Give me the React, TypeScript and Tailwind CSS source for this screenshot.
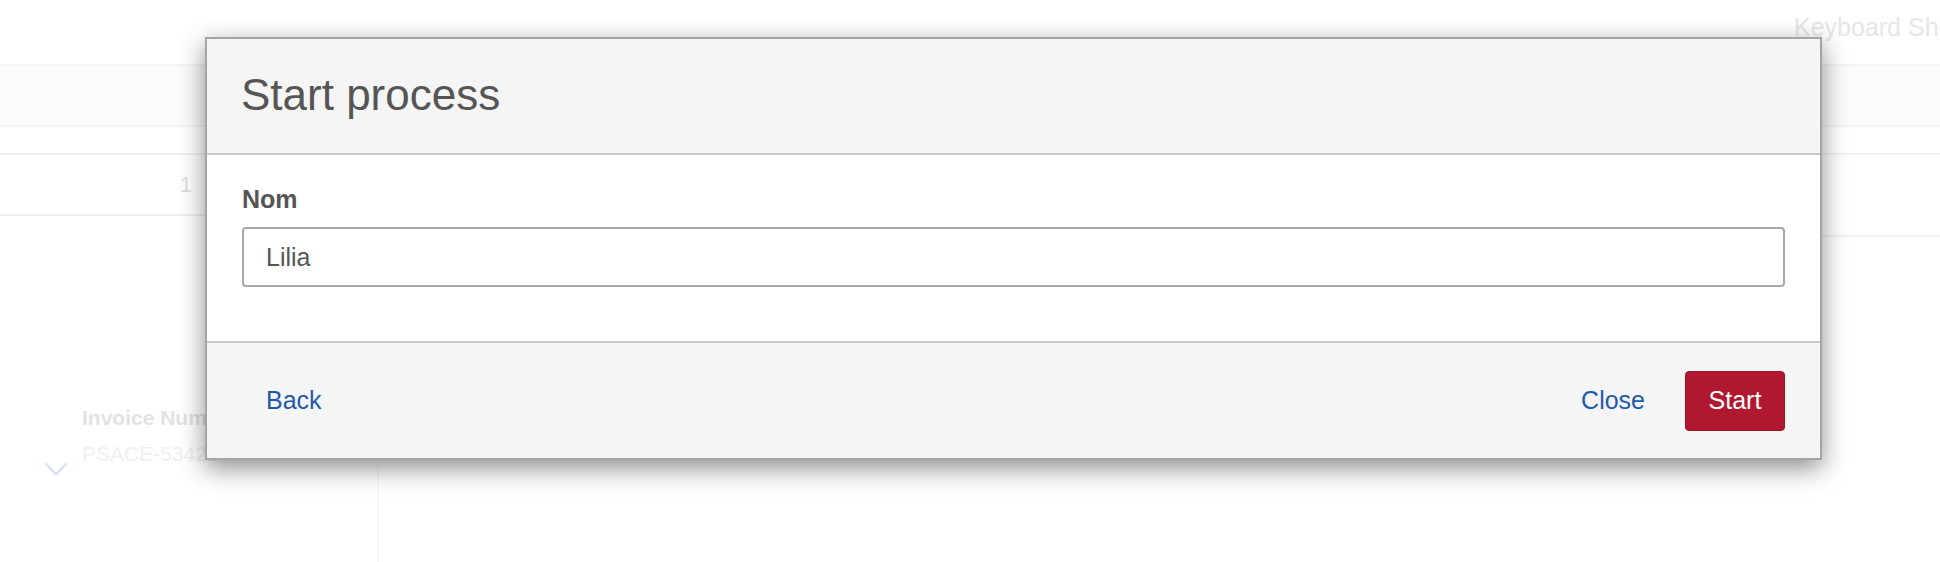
import React from "react";

function ChevronDown() {
  return (
    <svg width="24" height="15" viewBox="0 0 24 15" fill="none">
      <path d="M2 2 L12 12.5 L22 2" stroke="#d6e3f5" strokeWidth="2.5" strokeLinecap="round" />
    </svg>
  );
}

export default function App() {
  return (
    <div
      className="relative w-[1940px] h-[562px] overflow-hidden bg-white"
      style={{ fontFamily: '"Liberation Sans", Arial, sans-serif' }}
    >
      {/* page behind the dialog */}
      <div className="h-[64px] pt-[15px] pl-[1794px] whitespace-nowrap text-[25px] leading-[25px] text-[#e6e6e6]">
        Keyboard Shortcuts
      </div>
      <div className="h-[63px] border-y-2 border-[#f3f3f3] bg-[#fbfbfb]" />
      <div className="flex">
        <div className="w-[379px] h-[435px] border-r-2 border-[#f8f8f8]">
          <div className="mt-[26px] h-[63px] border-y-2 border-[#efefef] flex items-center justify-end pr-[185px] text-[22px] text-[#dcdcdc]">
            1
          </div>
          <div className="mt-[191px] flex">
            <div className="w-[82px] pl-[44px] pt-[55px]">
              <ChevronDown />
            </div>
            <div className="flex flex-col gap-[15px]">
              <div className="text-[21px] leading-[21px] font-bold text-[#e2e2e2] whitespace-nowrap">Invoice Number</div>
              <div className="text-[21px] leading-[21px] text-[#efefef] whitespace-nowrap">PSACE-53421</div>
            </div>
          </div>
        </div>
        <div className="flex-1">
          <div className="mt-[26px] h-[84px] border-y-2 border-[#f2f2f2]" />
        </div>
      </div>

      {/* dialog */}
      <div className="absolute left-[205px] top-[37px] w-[1617px] border-2 border-[#a4a4a4] bg-white shadow-[0_8px_24px_rgba(0,0,0,0.45)]">
        <div className="h-[116px] flex items-center px-[34px] pb-[2px] bg-[#f5f5f5] border-b-2 border-[#c8c8c8]">
          <h4 className="text-[44px] leading-none text-[#555555]">Start process</h4>
        </div>
        <div className="px-[35px] pt-[27px] pb-[54px]">
          <label className="block text-[25px] leading-[35px] font-bold text-[#555555] mb-[10px]">Nom</label>
          <input
            defaultValue="Lilia"
            className="block w-full h-[60px] border-2 border-[#a9a9a9] rounded-[4px] pl-[22px] text-[25px] text-[#555555] outline-none"
          />
        </div>
        <div className="h-[117px] flex items-center justify-between px-[35px] bg-[#f5f5f5] border-t-2 border-[#c8c8c8]">
          <span className="pl-[24px] text-[25px] text-[#1f59a9]">Back</span>
          <div className="flex items-center gap-[40px]">
            <span className="text-[25px] text-[#1f59a9]">Close</span>
            <button className="w-[100px] h-[60px] rounded-[4px] bg-[#b0182f] border border-[#9c1429] text-white text-[25px]">
              Start
            </button>
          </div>
        </div>
      </div>
    </div>
  );
}
